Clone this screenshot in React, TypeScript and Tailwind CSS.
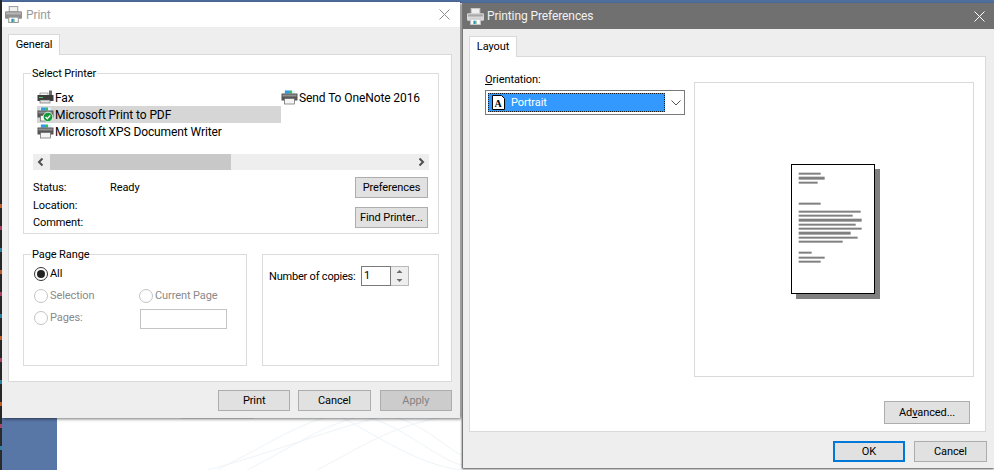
import React from "react";

const font = { fontFamily: 'Roboto, "Liberation Sans", sans-serif' };

function TitleIcon({ light }: { light?: boolean }) {
  return (
    <svg width="17" height="17" viewBox="0 0 16 16" className="shrink-0">
      <rect x="4" y="0.5" width="8" height="5" fill="#f0f0f0" stroke={light ? "#a0a0a0" : "#c8c8c8"} />
      <rect x="0" y="5" width="16" height="7" rx="1" fill={light ? "#8e8e8e" : "#d8d8d8"} />
      <rect x="1" y="6" width="14" height="2" fill={light ? "#b5b5b5" : "#a8a8a8"} />
      <rect x="3.5" y="10.5" width="9" height="5" fill="#ffffff" stroke={light ? "#9a9a9a" : "#c8c8c8"} />
      <rect x="6" y="12" width="2" height="3" fill="#2f8fb0" />
      <rect x="8" y="12" width="1" height="3" fill="#57a773" />
    </svg>
  );
}

function SmallPrinter({ kind }: { kind: "fax" | "pdf" | "xps" | "note" }) {
  return (
    <svg width="17" height="15" viewBox="0 0 17 15" className="shrink-0">
      {kind === "fax" ? (
        <>
          <rect x="3" y="3" width="8" height="3" fill="#f4f4f4" stroke="#777" strokeWidth="0.6" />
          <rect x="12" y="0.5" width="3" height="5" fill="#6d6d6d" />
          <rect x="0.5" y="5" width="16" height="6" fill="#3c3c3c" />
          <rect x="2" y="7" width="4" height="1" fill="#55c26a" />
          <rect x="3" y="10" width="10" height="3" fill="#e4e4e4" stroke="#555" strokeWidth="0.6" />
        </>
      ) : (
        <>
          <rect x="3" y="0.5" width="11" height="3.5" fill="#dff0ff" />
          <rect x="4" y="0.5" width="4" height="3" fill="#2f9be0" />
          <rect x="8" y="0.5" width="3" height="3" fill="#3dbb58" />
          <rect x="0.5" y="3.5" width="16" height="7" fill="#555" />
          <rect x="1.5" y="4.5" width="14" height="2" fill="#8f8f8f" />
          <rect x="3.5" y="8.5" width="10" height="5.5" fill="#f4f4f4" stroke="#666" strokeWidth="0.7" />
        </>
      )}
      {kind === "pdf" && (
        <>
          <circle cx="11" cy="10" r="4.8" fill="#159a39" stroke="#ffffff" strokeWidth="0.8" />
          <path d="M8.6 10l1.7 1.8 3-3.4" stroke="#ffffff" strokeWidth="1.3" fill="none" />
        </>
      )}
    </svg>
  );
}

function Group({ label, className, children }: { label?: string; className: string; children?: React.ReactNode }) {
  return (
    <div className={"relative border border-[#dcdcdc] " + className}>
      {label && (
        <span className="absolute left-[7px] top-[-8px] bg-white px-[1px] text-[11px] leading-[16px] text-black">{label}</span>
      )}
      {children}
    </div>
  );
}

function Btn({ children, className = "" }: { children: React.ReactNode; className?: string }) {
  return (
    <div className={"flex h-[21px] w-[73px] items-center justify-center whitespace-nowrap border border-[#adadad] bg-[#e1e1e1] pt-[1px] text-[11px] text-black " + className}>
      {children}
    </div>
  );
}

function Radio({ on, label, labelGray }: { on?: boolean; label: string; labelGray?: boolean }) {
  return (
    <div className="flex items-center">
      <span className={"flex h-[14px] w-[14px] items-center justify-center rounded-full border bg-white " + (on ? "border-[#333333]" : "border-[#c4c4c4]")}>
        {on && <span className="h-[8px] w-[8px] rounded-full bg-[#222222]" />}
      </span>
      <span className={"ml-[2px] text-[11px] leading-[16px] " + (labelGray ? "text-[#8a8a8a]" : "text-black")}>{label}</span>
    </div>
  );
}

function PrinterRow({ kind, label, active, className = "" }: { kind: "fax" | "pdf" | "xps" | "note"; label: string; active?: boolean; className?: string }) {
  return (
    <div className={"flex h-[17px] items-center text-[12px] text-black " + (active ? "bg-[#d6d6d6] " : "") + className}>
      <SmallPrinter kind={kind} />
      <span className="ml-[1px] whitespace-nowrap pt-[1px]">{label}</span>
    </div>
  );
}

function PrintDialog() {
  return (
    <div className="absolute left-[2px] top-[2px] flex h-[416px] w-[458px] flex-col bg-[#eeeeee] shadow-[1px_1px_3px_rgba(0,0,0,0.55)]">
      <div className="flex h-[25px] items-center bg-white pl-[3px] pr-[10px]">
        <TitleIcon light />
        <span className="ml-[4px] text-[12px] text-[#9a9a9a]">Print</span>
        <svg width="11" height="11" viewBox="0 0 11 11" className="ml-auto">
          <path d="M0.5 0.5l10 10M10.5 0.5l-10 10" stroke="#8c8c8c" strokeWidth="1" fill="none" />
        </svg>
      </div>
      <div className="flex-1 pl-[6px] pr-[8px] pt-[7px]">
        <div className="relative z-10 flex h-[21px] w-[52px] items-center justify-center border border-b-0 border-[#d9d9d9] bg-white text-[11px] text-black">General</div>
        <div className="mt-[-1px] h-[328px] border border-[#d9d9d9] bg-white pl-[14px] pr-[11px] pt-[18px]">
          <Group label="Select Printer" className="h-[161px] w-[416px] pl-[9px] pr-[10px] pt-[15px]">
            <div className="ml-[4px] flex">
              <div className="w-[244px] shrink-0">
                <PrinterRow kind="fax" label="Fax" />
                <PrinterRow kind="pdf" label="Microsoft Print to PDF" active />
                <PrinterRow kind="xps" label="Microsoft XPS Document Writer" />
              </div>
              <div>
                <PrinterRow kind="note" label="Send To OneNote 2016" />
              </div>
            </div>
            <div className="mt-[14px] flex h-[16px] w-[396px] items-center bg-[#eeeeee]">
              <svg width="17" height="16" viewBox="0 0 17 16" className="shrink-0">
                <path d="M9.5 4.5L6 8l3.5 3.5" stroke="#505050" strokeWidth="2" fill="none" />
              </svg>
              <div className="h-[16px] w-[181px] bg-[#c8c8c8]" />
              <svg width="17" height="16" viewBox="0 0 17 16" className="ml-auto shrink-0">
                <path d="M7.5 4.5L11 8l-3.5 3.5" stroke="#505050" strokeWidth="2" fill="none" />
              </svg>
            </div>
            <div className="mt-[7px] flex w-[395px] justify-between">
              <div className="pt-[2px] text-[11px] leading-[17.5px] text-black">
                <div className="flex"><span className="w-[77px]">Status:</span><span>Ready</span></div>
                <div>Location:</div>
                <div>Comment:</div>
              </div>
              <div className="flex flex-col gap-[9px]">
                <Btn>Preferences</Btn>
                <Btn>Find Printer...</Btn>
              </div>
            </div>
          </Group>
          <div className="mt-[20px] flex gap-[15px]">
            <Group label="Page Range" className="h-[112px] w-[224px] pl-[10px] pt-[11px]">
              <Radio on label="All" />
              <div className="mt-[6px] flex h-[16px]">
                <div className="w-[105px]"><Radio label="Selection" labelGray /></div>
                <Radio label="Current Page" labelGray />
              </div>
              <div className="mt-[6px] flex items-center">
                <div className="w-[106px]"><Radio label="Pages:" labelGray /></div>
                <div className="mb-[-3px] mt-[-1px] h-[20px] w-[87px] border border-[#c4c4c4] bg-white" />
              </div>
            </Group>
            <Group className="flex h-[112px] w-[177px] items-start pl-[6px] pt-[11px]">
              <span className="mt-[2px] w-[92px] whitespace-nowrap text-[11px] leading-[17px] tracking-[-0.2px] text-black">Number of copies:</span>
              <div className="flex h-[20px] w-[30px] items-center border border-[#7a7a7a] bg-white pl-[2px] text-[11px] text-black">1</div>
              <div className="flex h-[20px] w-[18px] flex-col border border-l-0 border-[#b9b9b9] bg-[#eeeeee]">
                <svg width="17" height="9" viewBox="0 0 17 9"><path d="M8.5 3l3 3h-6z" fill="#6a6a6a" /></svg>
                <svg width="17" height="9" viewBox="0 0 17 9"><path d="M8.5 6l3-3h-6z" fill="#6a6a6a" /></svg>
              </div>
            </Group>
          </div>
        </div>
        <div className="ml-[210px] mt-[8px] flex gap-[8px]">
          <Btn>Print</Btn>
          <Btn>Cancel</Btn>
          <Btn className="ml-[1px] !bg-[#cccccc] !text-[#838383]">Apply</Btn>
        </div>
      </div>
    </div>
  );
}

const pageLines: [number, number, number, number][] = [
  [87, 69, 66, 6], [87, 81, 78, 9], [87, 96, 57, 6], [87, 159, 66, 6],
  [87, 183, 186, 6], [87, 195, 162, 6], [87, 207, 189, 9], [87, 222, 171, 6],
  [87, 234, 189, 6], [87, 246, 156, 9], [87, 261, 177, 6], [87, 273, 132, 6],
  [87, 306, 39, 6], [87, 321, 78, 6], [87, 333, 66, 6],
];

function PagePreview() {
  return (
    <svg width="90" height="136" viewBox="0 0 270 408">
      <rect x="15" y="15" width="252" height="390" fill="#808080" />
      <rect x="1.5" y="1.5" width="249" height="387" fill="#ffffff" stroke="#000000" strokeWidth="3" />
      {pageLines.map(([x, y, w, h], i) => (
        <rect key={i} x={x - 64} y={y - 43} width={w} height={h} fill="#808080" />
      ))}
    </svg>
  );
}

function PrefsDialog() {
  return (
    <div className="absolute left-[462px] top-[3px] flex h-[465px] w-[532px] flex-col border-l border-[#777777] bg-[#eeeeee] shadow-[0_1px_2px_rgba(0,0,0,0.7)]">
      <div className="flex h-[26px] items-center bg-[#707070] pl-[4px] pr-[9px]">
        <TitleIcon />
        <span className="ml-[3px] text-[12px] text-[#f2f2f2]">Printing Preferences</span>
        <svg width="11" height="11" viewBox="0 0 11 11" className="ml-auto">
          <path d="M0.5 0.5l10 10M10.5 0.5l-10 10" stroke="#ffffff" strokeWidth="1" fill="none" />
        </svg>
      </div>
      <div className="flex-1 pl-[6px] pt-[7px]">
        <div className="relative z-10 flex h-[21px] w-[48px] items-center justify-center border border-b-0 border-[#d9d9d9] bg-white text-[11px] text-black">Layout</div>
        <div className="mt-[-1px] flex h-[376px] w-[517px] border border-[#d9d9d9] bg-white pl-[15px] pt-[13px]">
          <div className="w-[209px]">
            <div className="pt-[2px] text-[11px] leading-[16px] text-black"><span className="underline">O</span>rientation:</div>
            <div className="mt-[2px] flex h-[25px] w-[200px] items-center border border-[#7a7a7a] bg-white pl-[2px]">
              <div className="flex h-[19px] w-[177px] items-center border border-dotted border-[#1c1c1c] bg-[#3399ff] pl-[3px] text-[11px] text-white">
                <svg width="13" height="15" viewBox="0 0 13 15" className="shrink-0">
                  <path d="M0.5 0.5h9l3 3v11h-12z" fill="#ffffff" stroke="#000000" />
                  <text x="6" y="12" fontSize="10" fontWeight="700" fontFamily="Liberation Serif, serif" textAnchor="middle" fill="#000000">A</text>
                </svg>
                <span className="ml-[6px] pt-[1px]">Portrait</span>
              </div>
              <svg width="10" height="6" viewBox="0 0 10 6" className="ml-[6px]">
                <path d="M0.5 0.5l4.5 4.5 4.5-4.5" stroke="#555555" fill="none" />
              </svg>
            </div>
          </div>
          <div className="h-[295px] w-[280px] border border-[#d9d9d9] pl-[96px] pt-[81px]" style={{ marginTop: 12 }}>
            <PagePreview />
          </div>
          <div className="ml-[-90px] mt-[331px]">
            <Btn className="!h-[23px] !w-[86px]">
              <span>Ad<span className="underline">v</span>anced...</span>
            </Btn>
          </div>
        </div>
        <div className="ml-[364px] mt-[9px] flex gap-[9px]">
          <Btn className="!w-[72px] !border-2 !border-[#0078d7]">OK</Btn>
          <Btn>Cancel</Btn>
        </div>
      </div>
    </div>
  );
}

const stripColors = ["bg-[#c8622a]", "bg-[#b0436e]", "bg-[#2f86a8]"];

function Desktop() {
  const bits = Array.from({ length: 12 }, (_, i) => stripColors[i % 3]);
  return (
    <>
      <div className="absolute inset-x-0 top-0 h-[3px] bg-[#4f6f9f]" />
      <div className="absolute bottom-0 left-[2px] h-[60px] w-[55px] bg-[#5876a6]" />
      <div className="absolute left-0 top-0 flex h-full w-[2px] flex-col gap-[18px] bg-[#2a2a2a] pt-[204px]">
        {bits.map((c, i) => (
          <div key={i} className={"h-[4px] w-[2px] shrink-0 " + c} />
        ))}
      </div>
      <svg width="405" height="60" viewBox="0 0 405 60" className="absolute bottom-0 left-[57px]">
        <path d="M124 7h73v2h-73z M140 7l10-4h30l8 4z" fill="#ececec" />
        <g stroke="#eef4f8" fill="none" strokeWidth="1">
          <path d="M160 60C220 30 260 0 300 5S380 50 405 55" />
          <path d="M190 60C240 35 280 5 320 5S390 40 405 45" />
          <path d="M150 60C210 45 270 20 330 5" />
          <path d="M260 60C300 40 340 10 405 5" />
          <path d="M280 5C320 25 360 55 405 60" />
        </g>
      </svg>
    </>
  );
}

export default function App() {
  return (
    <div className="relative h-[470px] w-[994px] overflow-hidden bg-white tracking-[-0.1px]" style={font}>
      <Desktop />
      <PrintDialog />
      <PrefsDialog />
    </div>
  );
}
